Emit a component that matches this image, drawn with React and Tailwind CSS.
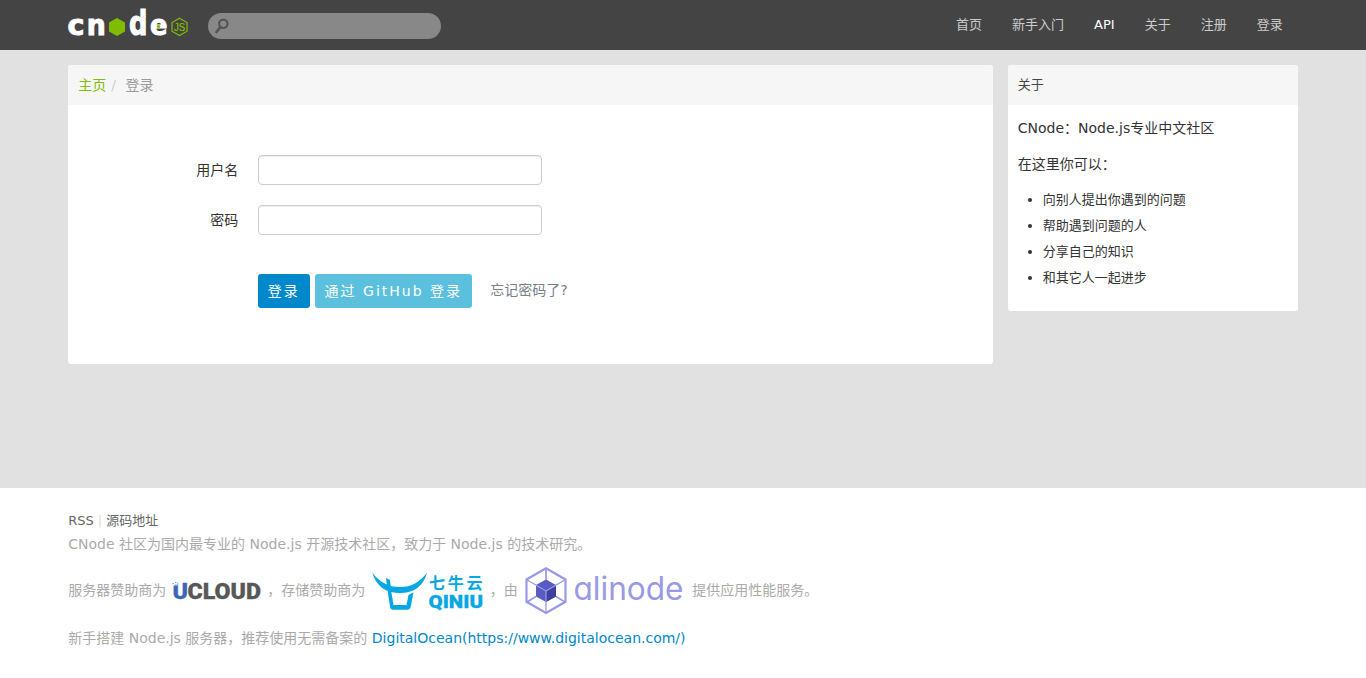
const nav = [
  { label: '首页' },
  { label: '新手入门' },
  { label: 'API', strong: true },
  { label: '关于' },
  { label: '注册' },
  { label: '登录' },
];

const tips = ['向别人提出你遇到的问题', '帮助遇到问题的人', '分享自己的知识', '和其它人一起进步'];

function CnodeLogo() {
  return (
    <svg width="120" height="28" viewBox="0 0 120 28" className="block overflow-visible" role="img" aria-label="cnode js">
      <g fill="#fff" stroke="#fff" strokeWidth="1" fontFamily="DejaVu Sans" fontWeight="bold" fontSize="28.5">
        <text x="-0.5" y="27" textLength="17" lengthAdjust="spacingAndGlyphs">c</text>
        <text x="18.8" y="27" textLength="19" lengthAdjust="spacingAndGlyphs">n</text>
        <text x="61" y="27" fontSize="33" textLength="18.5" lengthAdjust="spacingAndGlyphs">d</text>
        <text x="82" y="27" textLength="17.5" lengthAdjust="spacingAndGlyphs">e</text>
      </g>
      <polygon points="49,10 57,14.5 57,23.5 49,28 41,23.5 41,14.5" fill="#80bd01" />
      <polygon points="111.5,10.2 119,14.5 119,23.2 111.5,27.5 104,23.2 104,14.5" fill="none" stroke="#80bd01" strokeWidth="1.2" />
      <circle cx="90.5" cy="18.5" r="1.7" fill="#80bd01" />
      <text x="106" y="23" fill="#80bd01" stroke="#80bd01" strokeWidth="0.2" fontFamily="Liberation Sans" fontSize="11" textLength="11.3" lengthAdjust="spacingAndGlyphs">JS</text>
    </svg>
  );
}

function UcloudLogo() {
  return (
    <svg width="90" height="20" viewBox="0 0 90 20" className="block overflow-visible" role="img" aria-label="UCLOUD">
      <g fontFamily="Roboto" fontWeight="900" fontSize="22.5" strokeWidth="0.3">
        <text x="0.5" y="18.8" fill="#3b66b8" stroke="#3b66b8" textLength="15.5" lengthAdjust="spacingAndGlyphs">U</text>
        <text x="15.5" y="18.8" fill="#585858" stroke="#585858" textLength="73.5" lengthAdjust="spacingAndGlyphs">CLOUD</text>
      </g>
      <rect x="0" y="1.5" width="5.5" height="4" fill="#fff" />
      <path d="M0.5 3.5h1.5M3 2.5h1.5M2.5 5h2.5" stroke="#7fa3dc" strokeWidth="1" />
    </svg>
  );
}

function QiniuLogo() {
  return (
    <svg width="112" height="40" viewBox="0 0 112 40" className="block overflow-visible" role="img" aria-label="七牛云 QINIU">
      <g fill="#07a7e3">
        <path d="M0.3 2.7C8 12.5 16 17 28 17S47 12.5 55 2.7C51.5 16 42 23 28 23S4 16 0.3 2.7Z" />
        <path d="M14 8L18 10L19 20L21.5 35H34.5L36.5 25L41.5 22.3L38.8 36.5Q38 39.8 35 39.8H21Q18.5 39.8 18 36.5L15.5 20Z" />
        <text x="57" y="18.7" fontFamily="Noto Sans CJK SC" fontWeight="700" fontSize="16" textLength="53.5" lengthAdjust="spacing">七牛云</text>
        <text x="56.5" y="38" fontFamily="Roboto" fontWeight="900" fontSize="19" stroke="#07a7e3" strokeWidth="0.3" textLength="54.5" lengthAdjust="spacingAndGlyphs">QINIU</text>
      </g>
    </svg>
  );
}

function AlinodeLogo() {
  return (
    <svg width="160" height="48" viewBox="0 0 160 48" className="block overflow-visible" role="img" aria-label="alinode">
      <g transform="translate(0 1)">
        <polygon points="22,12.5 32,18 32,29.5 22,35 12,29.5 12,18" fill="#5a5ac2" />
        <polygon points="22,24 32,18.5 32,29.5 22,35" fill="#3f3f9f" />
        <g fill="none" stroke="#9999e5" strokeWidth="2.2">
          <polygon points="22,1.2 41.5,12.5 41.5,34.8 22,46 2.5,34.8 2.5,12.5" />
          <path d="M22 2V13M3 35L12 29.5M41 35L32 29.5" strokeWidth="1.7" />
          <path d="M2.5 12.5L22 24L41.5 12.5M22 24V46" strokeWidth="1.3" />
        </g>
        <text x="49.5" y="33.3" fill="#9999e5" fontFamily="Inter" fontWeight="400" fontSize="32" style={{ fontFeatureSettings: '"cv11"' }} textLength="110" lengthAdjust="spacingAndGlyphs">alinode</text>
      </g>
    </svg>
  );
}

function Field({ label, type }) {
  return (
    <label className="flex h-[30px] items-center">
      <span className="w-[170px] text-right text-[14px] leading-5">{label}</span>
      <input
        type={type}
        className="ml-5 h-[30px] w-[284px] rounded-[4px] border border-[#ccc] bg-white px-1.5 text-sm shadow-[inset_0_1px_1px_rgba(0,0,0,0.075)]"
      />
    </label>
  );
}

export default function App() {
  return (
    <div lang="zh-CN" className="h-[678px] overflow-hidden bg-[#e1e1e1] font-['DejaVu_Sans','Noto_Sans_CJK_SC',sans-serif] text-[14px] text-[#333]">
      <header className="h-[50px] bg-[#444]">
        <div className="mx-auto flex h-[50px] w-[90%] items-start">
          <a href="#" className="mt-2"><CnodeLogo /></a>
          <div className="mt-[13px] ml-5 flex h-[26px] w-[233px] items-center rounded-full bg-[#888] pl-[7px]">
            <svg width="15" height="16" viewBox="0 0 15 16" fill="none" stroke="#555">
              <circle cx="8.3" cy="5.8" r="4.2" strokeWidth="2.2" />
              <path d="M5.5 9L1.5 14" strokeWidth="2.8" strokeLinecap="round" />
            </svg>
          </div>
          <nav className="ml-auto flex text-[13px] leading-5">
            {nav.map((item) => (
              <a key={item.label} href="#" className={item.strong ? 'px-[15px] pt-[15px] text-white' : 'px-[15px] pt-[15px] text-[#ccc]'}>
                {item.label}
              </a>
            ))}
          </nav>
        </div>
      </header>

      <div className="mx-auto flex h-[438px] w-[90%] items-start justify-between pt-[15px]">
        <main className="h-[299px] w-[924.4px] overflow-hidden rounded-[3px] bg-white">
          <div className="flex h-10 items-center bg-[#f6f6f6] px-[10px] leading-5">
            <a href="#" className="text-[#80bd01]">主页</a>
            <span className="px-[5px] text-[#ccc]">/</span>
            <span className="ml-[4.5px] text-[#999]">登录</span>
          </div>
          <form className="flex flex-col gap-5 pt-[50px]" onSubmit={(e) => e.preventDefault()}>
            <Field label="用户名" type="text" />
            <Field label="密码" type="password" />
            <div className="mt-[19px] flex items-start pl-[190px]">
              <button type="submit" className="h-[34px] w-[52px] rounded-[3px] bg-[#08c] pr-px tracking-[2px] text-white">登录</button>
              <button type="button" className="ml-[5px] h-[34px] w-[157px] rounded-[3px] bg-[#5bc0de] pr-px tracking-[2px] whitespace-nowrap text-white">通过 GitHub 登录</button>
              <a href="#" className="ml-[18px] pt-[6px] leading-5 text-[#778087]">忘记密码了?</a>
            </div>
          </form>
        </main>

        <aside className="h-[246px] w-[290px] overflow-hidden rounded-[3px] bg-white">
          <div className="flex h-10 items-center bg-[#f6f6f6] px-[10px] text-[13px] text-[#444]">关于</div>
          <div className="px-[10px] pt-[10px]">
            <p className="leading-[26px]">CNode：Node.js专业中文社区</p>
            <p className="mt-[10px] leading-[26px]">在这里你可以：</p>
            <ul className="mt-[10px] ml-[25px] list-disc text-[13px] leading-[26px]">
              {tips.map((tip) => <li key={tip}>{tip}</li>)}
            </ul>
          </div>
        </aside>
      </div>

      <footer className="h-[190px] bg-white">
        <div className="mx-auto w-[90%] pt-[22px] text-[#aaa]">
          <div className="flex h-[22px] items-center text-[13px] text-[#666]">
            <a href="#">RSS</a>
            <span className="px-1 text-[#ddd]">|</span>
            <a href="#">源码地址</a>
          </div>
          <p className="leading-6">CNode 社区为国内最专业的 Node.js 开源技术社区，致力于 Node.js 的技术研究。</p>
          <div className="mt-[10px] flex h-12 items-center">
            <span>服务器赞助商为</span>
            <span className="ml-[6px]"><UcloudLogo /></span>
            <span className="ml-[5px]">，存储赞助商为</span>
            <span className="ml-[6.5px]"><QiniuLogo /></span>
            <span className="ml-[6px]">，由</span>
            <span className="ml-[6.5px]"><AlinodeLogo /></span>
            <span className="ml-[8px]">提供应用性能服务。</span>
          </div>
          <p className="mt-3 leading-6">
            新手搭建 Node.js 服务器，推荐使用无需备案的 <a href="#" className="text-[#08c]">DigitalOcean(https://www.digitalocean.com/)</a>
          </p>
        </div>
      </footer>
    </div>
  );
}
